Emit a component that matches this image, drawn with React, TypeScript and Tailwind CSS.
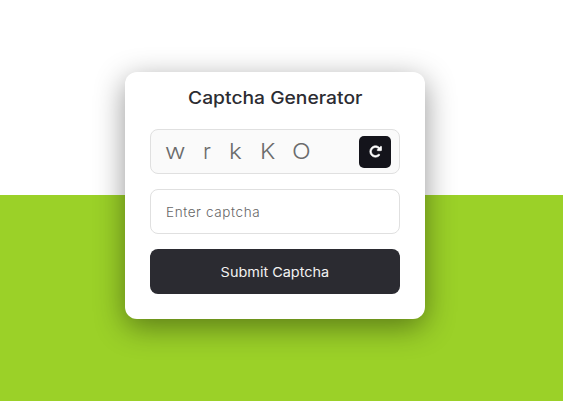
import { FaRotateRight } from "react-icons/fa6";

const letters = [
  { char: "w", cell: "w-[38px]", scale: "scale-x-[1.14]" },
  { char: "r", cell: "w-[26px]", scale: "scale-x-100" },
  { char: "k", cell: "w-[31px]", scale: "scale-x-[1.1]" },
  { char: "K", cell: "w-[32px]", scale: "scale-x-[1.08]" },
  { char: "O", cell: "w-[22px]", scale: "scale-x-[1.12]" },
];

export default function App() {
  return (
    <main className="flex h-[401px] w-full flex-col items-center bg-[linear-gradient(to_bottom,#fff_195px,#9bd128_195px)] pt-[72px] font-['Inter','Open_Sans',sans-serif]">
      <section className="mr-[13px] flex h-[247px] w-[300px] flex-col rounded-xl bg-white px-[25px] pt-[15px] shadow-[0_8px_30px_rgba(0,0,0,0.42)]">
        <h1 className="mb-px text-center text-[17.5px] leading-[21px] font-medium whitespace-nowrap text-[#2c2c32]">
          <span className="inline-block scale-x-[1.1]">Captcha Generator</span>
        </h1>
        <div className="mt-5 flex h-[45px] items-center rounded-lg border border-[#e0e0e0] bg-[#fafafa] pr-2 pl-[14px]">
          <div className="flex flex-1 -translate-y-px text-[22px] leading-7 font-light text-[#6b6b6b]">
            {letters.map(({ char, cell, scale }) => (
              <span key={char} className={`${cell} ${scale} origin-left`}>
                {char}
              </span>
            ))}
          </div>
          <button
            aria-label="Refresh captcha"
            className="flex size-8 items-center justify-center rounded-[5px] bg-[#14141b] text-[13px] text-white"
          >
            <FaRotateRight className="stroke-white stroke-[24]" />
          </button>
        </div>
        <input
          placeholder="Enter captcha"
          className="mt-[15px] h-[45px] rounded-lg border border-[#e0e0e0] bg-white px-[15px] text-[13.5px] tracking-[0.6px] outline-none placeholder:font-light placeholder:text-[#666666]"
        />
        <button className="mt-[15px] h-[45px] rounded-lg bg-[#2b2b31] pt-0.5 text-[13px] text-[#f2f2f2]">
          <span className="inline-block scale-x-[1.11]">Submit Captcha</span>
        </button>
      </section>
    </main>
  );
}
